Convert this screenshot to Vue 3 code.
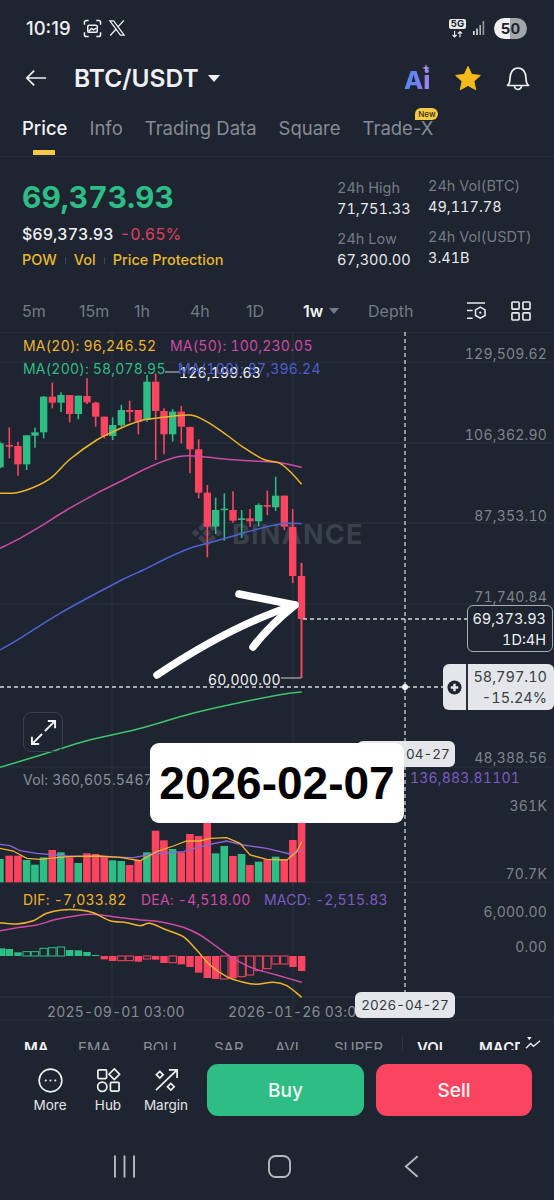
<script setup>
const cx = (z) => z / 3
const cy = (z) => z / 3 + 330
const G = '#2ebd85'
const R = '#fb4560'
const xs = [0,28,54,80,105,131,157,183,209,235,261,287,313,338,364,389,415,441,467,492,518,544,570,596,622,647,673,699,725,750,776,802,827,853]
const raw = [
  ['g',335,415,340,412],['r',292,385,345,350],['r',335,437,348,403],['g',315,420,316,403],['g',293,353,307,317],
  ['g',198,325,200,307],['r',158,235,200,218],['g',187,246,195,218],['r',195,277,195,252],['g',197,268,197,252],
  ['r',145,222,198,217],['r',215,290,218,260],['r',260,325,260,318],['g',262,330,285,318],['g',225,290,240,286],
  ['r',212,275,240,246],['r',240,313,240,275],['g',135,275,155,270],['r',130,390,155,243],['r',235,373,243,313],
  ['g',238,335,245,313],['r',228,340,245,290],['r',290,430,291,358],['r',328,505,358,488],['r',465,682,488,590],
  ['g',503,612,540,590],['g',490,632,536,540],['r',484,578,540,572],['g',540,624,565,570],['r',537,590,565,574],
  ['g',520,590,525,574],['r',482,555,525,530],['g',440,543,497,532],['r',497,600,497,590]
]
const candles = raw.map((c, i) => ({
  x: cx(xs[i]), color: c[0] === 'g' ? G : R, sw: 1.6,
  wt: cy(c[1]), wb: cy(c[2]), bt: cy(c[3]), bh: Math.max(1.5, (c[4] - c[3]) / 3)
}))
candles.push({ x: 292.7, color: R, sw: 1.6, wt: 509, wb: 583, bt: 527, bh: 49 })
candles.push({ x: 301.5, color: R, sw: 2, wt: 563, wb: 678, bt: 576, bh: 43 })

const pts = (arr, oy) => arr.map(([x, y]) => `${(x / 3).toFixed(1)},${(y / 3 + oy).toFixed(1)}`).join(' ')
const smooth = (arr, oy) => {
  const p = arr.map(([x, y]) => [x / 3, y / 3 + oy])
  let d = `M${p[0][0].toFixed(1)} ${p[0][1].toFixed(1)}`
  for (let i = 0; i < p.length - 1; i++) {
    const a = p[i - 1] || p[i], b = p[i], c = p[i + 1], e = p[i + 2] || c
    const c1 = [b[0] + (c[0] - a[0]) / 6, b[1] + (c[1] - a[1]) / 6]
    const c2 = [c[0] - (e[0] - b[0]) / 6, c[1] - (e[1] - b[1]) / 6]
    d += ` C${c1[0].toFixed(1)} ${c1[1].toFixed(1)} ${c2[0].toFixed(1)} ${c2[1].toFixed(1)} ${c[0].toFixed(1)} ${c[1].toFixed(1)}`
  }
  return d
}
const ma20 = smooth([[0,490],[50,488],[105,470],[155,442],[210,388],[290,330],[340,305],[390,283],[440,268],[490,262],[570,255],[620,275],[680,315],[730,352],[790,388],[840,400],[875,430],[905,463]], 330)
const ma50 = smooth([[0,655],[60,625],[120,590],[200,540],[290,490],[370,450],[440,415],[500,390],[550,378],[610,380],[680,388],[760,393],[840,398],[905,412]], 330)
const ma100 = smooth([[0,960],[60,925],[180,850],[365,750],[430,720],[500,685],[570,655],[640,635],[720,612],[800,590],[860,580],[905,581]], 330)
const ma200 = smooth([[0,232],[130,193],[260,152],[410,118],[570,72],[700,42],[840,14],[905,6]], 690)

const volX = [0,28,54,80,105,131,157,183,209,235,261,287,313,338,364,389,415,441,467,492,518,544,570,596,622,647,673,699,725,750,776,802,827,853,879,905]
const volT = [237,227,227,240,254,232,210,217,232,249,220,222,230,241,243,255,240,217,152,181,207,217,162,168,120,220,198,228,222,255,245,238,230,238,180,120]
const volC = ['g','r','r','g','g','g','r','g','r','g','r','r','r','g','g','r','r','g','r','r','g','r','r','r','r','g','g','r','g','r','g','r','g','r','r','r']
const vols = volX.map((x, i) => ({ x: x / 3 - 3.9, y: volT[i] / 3 + 780, h: (307 - volT[i]) / 3, c: volC[i] === 'g' ? G : R }))
const volY = pts([[0,205],[40,213],[80,235],[120,238],[200,230],[300,228],[360,232],[420,242],[470,215],[520,198],[560,183],[600,183],[630,175],[680,173],[720,190],[750,225],[800,238],[860,240],[890,215],[905,185]], 780)
const volP = pts([[0,193],[30,197],[60,212],[110,220],[200,228],[300,230],[400,233],[460,222],[550,215],[620,195],[680,183],[730,195],[800,205],[870,222],[905,210]], 780)

const histRaw = [[5,505,1],[28,507,1],[54,517,1],[80,515,0],[105,515,0],[131,505,0],[157,503,0],[183,501,0],[209,510,1],[235,511,1],[261,516,1],[287,525,1],
  [313,538,1],[338,543,1],[364,542,0],[389,542,0],[415,545,1],[441,537,0],[467,539,1],[492,549,1],[518,548,0],[544,553,1],[570,561,1],[596,578,1],[622,594,1],[647,597,1],[673,597,0],[699,595,1],[725,590,0],[750,585,0],[776,572,0],[802,566,0],[827,552,0],[853,552,0],[879,561,1],[905,573,1]]
const hist = histRaw.map(([x, v, f]) => {
  const up = v < 528
  const t = Math.min(v, 528), h = Math.abs(528 - v)
  return {
    x: x / 3 - 3.7, y: t / 3 + 780, h: Math.max(1, h / 3), w: 7.4,
    fill: f ? (up ? G : R) : 'none', stroke: f ? 'none' : (up ? G : R)
  }
})
const dif = smooth([[0,428],[50,432],[100,422],[140,400],[185,390],[240,390],[280,398],[330,422],[380,428],[420,437],[450,430],[500,450],[550,470],[590,510],[630,555],[680,590],[730,607],[770,613],[820,607],[860,617],[905,652]], 780)
const dea = smooth([[0,452],[60,442],[110,435],[170,418],[230,407],[280,403],[340,410],[420,420],[480,425],[550,442],[600,465],[650,500],[700,535],[760,565],[830,585],[905,607]], 780)

const hLines = [362, 443, 523, 604, 767, 882, 997, 1020]
const vLines = [112, 293]
const axis = [
  ['129,509.62', 359], ['106,362.90', 440], ['87,353.10', 521], ['71,740.84', 602],
  ['48,388.56', 763], ['361K', 811], ['70.7K', 879], ['6,000.00', 917], ['0.00', 952]
]
const tabs = ['Price', 'Info', 'Trading Data', 'Square', 'Trade-X']
const intervals = ['5m', '15m', '1h', '4h', '1D']
const inds = [['MA', 1], ['EMA', 0], ['BOLL', 0], ['SAR', 0], ['AVL', 0], ['SUPER', 0], ['VOL', 1], ['MACD', 1]]
</script>

<template>
  <div class="page">
    <div class="status">
      <span class="time">10:19</span>
      <svg class="shot" viewBox="0 0 20 20" fill="none" stroke="#eef0f3" stroke-width="1.6">
        <path d="M1.5 6V3.5a2 2 0 0 1 2-2H6M14 1.5h2.5a2 2 0 0 1 2 2V6M18.500 14v2.500a2 2 0 0 1-2 2H14M6 18.500H3.500a2 2 0 0 1-2-2V14" />
        <rect x="5" y="6.500" width="10" height="7.500" rx="1.500" />
        <path d="M6 13l3-3 2 1.500 3-2" />
      </svg>
      <svg class="xlogo" viewBox="0 0 24 24" fill="none" stroke="#eef0f3" stroke-width="1.700">
        <path d="M2.500 2.500h5l14 19h-5z" />
        <path d="M21 2l-8 8.800M3 22l8.200-9" />
      </svg>
      <div class="status-right">
        <div class="net">
          <span class="fiveg">5G</span>
          <svg class="updown" viewBox="0 0 18 8" fill="none" stroke="#eef0f3" stroke-width="1.400"><path d="M5.500 0v7M3 5l2.500 2.500L8 5M12 8V1M9.500 3.500L12 1l2.500 2.500" /></svg>
        </div>
        <svg class="signal" viewBox="0 0 14 16" fill="#dfe2e6"><rect x="0" y="11" width="1.600" height="4" /><rect x="3.200" y="8.500" width="1.600" height="6.500" /><rect x="6.400" y="5" width="1.600" height="10" opacity=".75" /><rect x="9.600" y="1" width="1.600" height="14" opacity=".6" /></svg>
        <div class="battery"><span>50</span></div>
      </div>
    </div>

    <div class="header">
      <svg class="back" viewBox="0 0 24 20" fill="none" stroke="#eef0f3" stroke-width="1.900"><path d="M23 10H2M10 2l-8 8 8 8" /></svg>
      <span class="pair">BTC/USDT</span>
      <span class="caret"></span>
      <div class="header-right">
        <div class="ai"><span class="ai-text">Ai</span><svg class="spark" viewBox="0 0 8 8" fill="#b48cf0"><path d="M4 0l1 3 3 1-3 1-1 3-1-3-3-1 3-1z" /></svg></div>
        <svg class="star" viewBox="0 0 26 25" fill="#f3bb1c"><path d="M13 .5l3.700 7.900 8.600 1-6.400 5.800 1.800 8.500L13 19.400l-7.700 4.300 1.800-8.500L.7 9.400l8.600-1z" stroke="#f3bb1c" stroke-linejoin="round" /></svg>
        <svg class="bell" viewBox="0 0 24 25" fill="none" stroke="#eef0f3" stroke-width="1.700"><path d="M1.500 19.500c2-1.500 2.500-3.500 2.500-7.500 0-5.500 3-10 8-10s8 4.500 8 10c0 4 .5 6 2.500 7.500z" stroke-linejoin="round" /><path d="M8.500 20a3.500 3.500 0 0 0 7 0" /></svg>
      </div>
    </div>

    <div class="tabs">
      <div v-for="(t, i) in tabs" :key="t" class="tab" :class="{ active: i === 0 }">
        {{ t }}
        <span v-if="i === 0" class="underline"></span>
        <span v-if="i === 4" class="new">New</span>
      </div>
    </div>

    <div class="price">
      <div class="price-left">
        <div class="big">69,373.93</div>
        <div class="sub"><span class="usd">$69,373.93</span> <span class="pct">-0.65%</span></div>
        <div class="badges"><span>POW</span><i></i><span>Vol</span><i></i><span>Price Protection</span></div>
      </div>
      <div class="stats">
        <div class="stat"><label>24h High</label><b>71,751.33</b></div>
        <div class="stat up"><label>24h Vol(BTC)</label><b>49,117.78</b></div>
        <div class="stat"><label>24h Low</label><b>67,300.00</b></div>
        <div class="stat up"><label>24h Vol(USDT)</label><b>3.41B</b></div>
      </div>
    </div>

    <div class="intervals">
      <span v-for="t in intervals" :key="t">{{ t }}</span>
      <span class="cur">1w<em></em></span>
      <span>Depth</span>
      <div class="int-icons">
        <svg viewBox="0 0 21 21" fill="none" stroke="#e8eaed" stroke-width="1.600"><path d="M1 2h19M1 10h6M1 18h6" /><path d="M15 6.500l5 2.900v5.800l-5 2.900-5-2.900V9.400z" /><circle cx="15" cy="12.300" r="1.200" fill="#e8eaed" stroke="none" /></svg>
        <svg viewBox="0 0 21 21" fill="none" stroke="#e8eaed" stroke-width="1.700"><rect x="1" y="1" width="7.500" height="7.500" rx="1" /><rect x="12.500" y="1" width="7.500" height="7.500" rx="1" /><rect x="1" y="12.500" width="7.500" height="7.500" rx="1" /><rect x="12.500" y="12.500" width="7.500" height="7.500" rx="1" /></svg>
      </div>
    </div>

    <div class="chart">
      <svg class="plot" viewBox="0 332 554 698" width="554" height="698">
        <line x1="0" x2="554" y1="332" y2="332" class="grid" />
        <line v-for="y in hLines" :key="y" x1="0" x2="554" :y1="y" :y2="y" class="grid" />
        <line v-for="x in vLines" :key="x" :x1="x" :x2="x" y1="332" y2="1020" class="grid" />

        <g class="wm">
          <path d="M207 519l9 9-3.500 3.500-5.500-5.500-5.500 5.500-3.500-3.500zM207 547l9-9-3.500-3.500-5.500 5.500-5.500-5.500-3.500 3.500zM207 528l5 5-5 5-5-5zM195.500 529l4 4-4 4-4-4zM218.500 529l4 4-4 4-4-4z" fill="#3a404c" />
          <text x="232" y="544" class="wm-text">BINANCE</text>
        </g>

        <g v-for="(c, i) in candles" :key="i">
          <line :x1="c.x" :x2="c.x" :y1="c.wt" :y2="c.wb" :stroke="c.color" :stroke-width="c.sw" />
          <rect :x="c.x - 3.700" :y="c.bt" width="7.400" :height="c.bh" :fill="c.color" />
        </g>

        <path :d="ma200" class="ln" stroke="#3fc46f" />
        <path :d="ma100" class="ln" stroke="#4f63d8" />
        <path :d="ma50" class="ln" stroke="#cf4aa6" />
        <path :d="ma20" class="ln" stroke="#eeb52c" />

        <rect v-for="(v, i) in vols" :key="'v' + i" :x="v.x" :y="v.y" width="7.600" :height="v.h" :fill="v.c" />
        <polyline :points="volP" class="ln thin" stroke="#8f62d6" />
        <polyline :points="volY" class="ln thin" stroke="#eeb52c" />

        <rect v-for="(h, i) in hist" :key="'h' + i" :x="h.x" :y="h.y" :width="h.w" :height="h.h" :fill="h.fill" :stroke="h.stroke" stroke-width="1" />
        <path :d="dea" class="ln" stroke="#cf4aa6" />
        <path :d="dif" class="ln" stroke="#eeb52c" />

        <line x1="165" x2="179" y1="372" y2="372" stroke="#c9ccd2" />
        <text x="179" y="378" class="tx mark">126,199.63</text>
        <line x1="281" x2="301" y1="678" y2="678" stroke="#c9ccd2" />
        <text x="208" y="685" class="tx mark">60,000.00</text>

        <text x="23" y="351" class="tx" fill="#eeb52c">MA(20): 96,246.52</text>
        <text x="170" y="351" class="tx" fill="#cf4aa6">MA(50): 100,230.05</text>
        <text x="23" y="374" class="tx" fill="#2ebd85">MA(200): 58,078.95</text>
        <text x="178" y="374" class="tx" fill="#4c5fd0">MA(100): 87,396.24</text>

        <text x="23" y="785" class="tx" fill="#8a8f99">Vol: 360,605.5467</text>
        <text x="410" y="783" class="tx" fill="#7b5cc4">136,883.81101</text>

        <text x="23" y="905" class="tx" fill="#eeb52c">DIF: -7,033.82</text>
        <text x="141" y="905" class="tx" fill="#cf4aa6">DEA: -4,518.00</text>
        <text x="264" y="905" class="tx" fill="#7b5cc4">MACD: -2,515.83</text>

        <text x="47" y="1017" class="tx" fill="#878c96">2025-09-01 03:00</text>
        <text x="228" y="1017" class="tx" fill="#878c96">2026-01-26 03:00</text>

        <text v-for="a in axis" :key="a[0]" x="547" :y="a[1]" class="tx axis">{{ a[0] }}</text>

        <line x1="405" x2="405" y1="332" y2="992" class="dash" />
        <line x1="0" x2="444" y1="687" y2="687" class="dash" />
        <line x1="303" x2="467" y1="619" y2="619" class="dash" />
        <circle cx="405" cy="687" r="3" fill="#f1f2f4" />

        <path d="M157 675Q232 625 295 605" class="arrow" />
        <path d="M239 594L295 605Q270 625 253 647" class="arrow" />
      </svg>

      <div class="tag-price"><span>69,373.93</span><span>1D:4H</span></div>
      <div class="tag-cross">
        <div class="plus"><svg viewBox="0 0 16 16"><circle cx="8" cy="8" r="7.500" fill="#1e2430" /><path d="M8 4v8M4 8h8" stroke="#e6e8eb" stroke-width="2.600" /></svg></div>
        <div class="cross-vals"><span>58,797.10</span><span>-15.24%</span></div>
      </div>
      <div class="expand">
        <svg viewBox="0 0 28 28" fill="none" stroke="#f0f1f3" stroke-width="2"><path d="M15.500 12.500L26 2M18.500 2H26v7.500M12.500 15.500L2 26M9.500 26H2v-7.500" /></svg>
      </div>
      <div class="date-back">2026-04-27</div>
      <div class="date-front">2026-02-07</div>
      <div class="date-axis">2026-04-27</div>
    </div>

    <div class="inds">
      <span v-for="d in inds" :key="d[0]" :class="{ on: d[1] }">{{ d[0] }}</span>
      <i class="ind-sep"></i>
      <svg class="ind-icon" viewBox="0 0 18 16" fill="none" stroke="#e8eaed" stroke-width="1.500"><path d="M0 2v14M2 1h5L4.500 4.500z" fill="#e8eaed" stroke="none" /><path d="M1 13l5-5 3 3 7-6" /></svg>
    </div>

    <div class="actions">
      <div class="act">
        <svg viewBox="0 0 26 26" fill="none" stroke="#f0f1f3" stroke-width="1.700"><circle cx="13" cy="13" r="11.800" /><circle cx="8" cy="13" r="1.100" fill="#f0f1f3" stroke="none" /><circle cx="13" cy="13" r="1.100" fill="#f0f1f3" stroke="none" /><circle cx="18" cy="13" r="1.100" fill="#f0f1f3" stroke="none" /></svg>
        <span>More</span>
      </div>
      <div class="act">
        <svg viewBox="0 0 26 26" fill="none" stroke="#f0f1f3" stroke-width="1.800"><rect x="2" y="2" width="9" height="9" rx="1" /><path d="M19 1l5.500 5.500L19 12l-5.500-5.500z" /><circle cx="6.500" cy="19.500" r="4.800" /><rect x="15" y="15" width="9" height="9" rx="1" /></svg>
        <span>Hub</span>
      </div>
      <div class="act">
        <svg viewBox="0 0 26 26" fill="none" stroke="#f0f1f3" stroke-width="1.800"><path d="M2 23L24 2M15.500 2H24v8.500" /><path d="M6 3.500l3.500 3.500L6 10.500 2.500 7z" /><path d="M17.500 16l3.500 3.500-3.500 3.500-3.500-3.500z" /></svg>
        <span>Margin</span>
      </div>
      <button class="btn buy">Buy</button>
      <button class="btn sell">Sell</button>
    </div>

    <div class="nav">
      <svg class="n1" viewBox="0 0 22 23" fill="none" stroke="#b5b8bd" stroke-width="2"><path d="M1 0v23M11 0v23M21 0v23" /></svg>
      <svg class="n2" viewBox="0 0 24 24" fill="none" stroke="#b5b8bd" stroke-width="2"><rect x="1" y="1" width="22" height="22" rx="7" /></svg>
      <svg class="n3" viewBox="0 0 16 24" fill="none" stroke="#b5b8bd" stroke-width="2"><path d="M14.500 1L2 12l12.500 11" /></svg>
    </div>
  </div>
</template>

<style>
html, body { margin: 0; background: #1e2430; }
</style>

<style scoped>
.page {
  width: 554px;
  height: 1200px;
  background: #1e2430;
  color: #eef0f3;
  font-family: Inter, "Noto Sans", sans-serif;
  font-variant-numeric: tabular-nums;
  display: flex;
  flex-direction: column;
  overflow: hidden;
}
.status {
  height: 56px;
  padding: 0 27px 0 26px;
  display: flex;
  align-items: center;
  flex: none;
}
.time { font-size: 18.5px; font-weight: 500; width: 57px; font-variant-numeric: normal; }
.shot { width: 19px; height: 19px; }
.xlogo { width: 18px; height: 18px; margin-left: 6px; }
.status-right { margin-left: auto; display: flex; align-items: center; }
.net { width: 17px; display: flex; flex-direction: column; align-items: center; }
.fiveg {
  background: #e8eaed; color: #1e2430; font-size: 9.5px; font-weight: 700;
  border-radius: 2px; line-height: 10px; width: 17px; text-align: center;
}
.updown { width: 15px; height: 8px; margin-top: 1px; }
.signal { width: 14px; height: 16px; margin-left: 7px; }
.battery {
  width: 33px; height: 21px; border-radius: 11px; margin-left: 7px;
  background: linear-gradient(90deg, #f0f1f3 0 50%, #a2a5aa 50% 100%);
  color: #1e2430; font-size: 15px; font-weight: 700; text-align: center; line-height: 21px;
}
.header {
  height: 44px;
  padding: 0 24px 0 25px;
  display: flex;
  align-items: center;
  flex: none;
}
.back { width: 22px; height: 20px; }
.pair { font-size: 24.5px; font-weight: 600; margin-left: 27px; }
.caret {
  width: 0; height: 0; margin-left: 9px;
  border-left: 6px solid transparent; border-right: 6px solid transparent; border-top: 7px solid #eef0f3;
}
.header-right { margin-left: auto; display: flex; align-items: center; }
.ai { position: relative; width: 27px; margin-top: 4px; }
.ai-text {
  font-size: 25px; font-weight: 800; line-height: 24px; display: block;
  background: linear-gradient(100deg, #4a8cf5, #7a7cf0 60%, #b48cf0);
  -webkit-background-clip: text; background-clip: text; color: transparent;
}
.spark { position: absolute; right: 1px; top: -4px; width: 8px; height: 8px; }
.star { width: 26px; height: 25px; margin-left: 24px; }
.bell { width: 24px; height: 25px; margin-left: 25px; }
.tabs {
  height: 57px;
  box-sizing: border-box;
  padding: 0 22px;
  display: flex;
  gap: 22px;
  align-items: center;
  border-bottom: 1px solid #2a303b;
  flex: none;
  font-variant-numeric: normal;
}
.tab { position: relative; font-size: 18.500px; font-weight: 400; color: #868c97; }
.tab.active { color: #f1f2f4; font-weight: 500; }
.underline { position: absolute; left: 11px; top: 33px; width: 22px; height: 5px; background: #f3c945; }
.new {
  position: absolute; right: -5px; top: -9px; width: 23px; height: 12px; border-radius: 6px 6px 6px 0;
  background: #f3c945; color: #3a2f0a; font-size: 8px; line-height: 12px; text-align: center; font-weight: 500;
}
.price {
  height: 133px;
  padding: 0 0 0 22px;
  display: flex;
  flex: none;
  box-sizing: border-box;
}
.price-left { width: 315px; padding-top: 22px; }
.big { font-size: 30px; font-weight: 700; line-height: 36px; color: #2ebd85; }
.sub { font-size: 16px; margin-top: 9px; line-height: 20px; }
.usd { color: #f1f2f4; font-weight: 500; }
.pct { color: #e0405f; margin-left: 2px; }
.badges {
  margin-top: 7px; font-size: 14.500px; font-weight: 500; color: #e8b92e;
  display: flex; align-items: center; gap: 8px; line-height: 18px;
}
.badges i { width: 1px; height: 7px; background: #3c424d; }
.stats {
  display: grid;
  grid-template-columns: 91px auto;
  row-gap: 9px;
  align-content: start;
  padding-top: 20px;
}
.stat { display: flex; flex-direction: column; font-size: 14.500px; line-height: 21px; }
.stat.up { margin-top: -2px; }
.stat label { color: #757b86; }
.stat b { font-weight: 400; color: #e6e8eb; }
.intervals {
  height: 42px;
  padding: 0 23px 0 22px;
  display: grid;
  grid-template-columns: 57px 55px 56px 56px 57px 65px auto 1fr;
  align-items: center;
  font-size: 16px;
  color: #757b86;
  flex: none;
  font-variant-numeric: normal;
}
.cur { color: #f1f2f4; font-weight: 600; display: flex; align-items: center; }
.cur em {
  margin-left: 6px; width: 0; height: 0;
  border-left: 5px solid transparent; border-right: 5px solid transparent; border-top: 6px solid #757b86;
}
.int-icons { justify-self: end; display: flex; gap: 25px; }
.int-icons svg { width: 20px; height: 20px; display: block; }
.chart { position: relative; height: 698px; flex: none; }
.plot { position: absolute; left: 0; top: 0; display: block; }
.grid { stroke: #2b313c; stroke-width: 1; }
.wm-text { font-size: 27px; font-weight: 700; fill: #3a404c; letter-spacing: 1.200px; font-family: Inter, sans-serif; }
.ln { fill: none; stroke-width: 1.500; }
.thin { stroke-width: 1.300; }
.tx { font-family: Inter, sans-serif; font-size: 14px; letter-spacing: .2px; font-variant-numeric: tabular-nums; }
.mark { fill: #f0f1f3; }
.axis { fill: #7e838d; text-anchor: end; }
.dash { stroke: #d5d7db; stroke-width: 1.300; stroke-dasharray: 4 3; }
.arrow { fill: none; stroke: #fff; stroke-width: 7.500; stroke-linecap: round; stroke-linejoin: round; }
.tag-price {
  position: absolute; left: 467px; top: 273px; width: 86px; height: 47px;
  box-sizing: border-box; border: 1px solid #a7abb2; border-radius: 6px; background: #1e2430;
  display: flex; flex-direction: column; align-items: flex-end; justify-content: center;
  padding-right: 6px; font-size: 14.500px; line-height: 21px; color: #eef0f3;
}
.tag-cross {
  position: absolute; left: 443px; top: 332px; width: 111px; height: 46px; border-radius: 6px;
  background: #e4e6ea; display: flex; overflow: hidden;
}
.plus { width: 23px; display: flex; align-items: center; justify-content: center; border-right: 2px solid #2b313c; }
.plus svg { width: 15px; height: 15px; }
.cross-vals {
  flex: 1; display: flex; flex-direction: column; align-items: flex-end; justify-content: center;
  padding-right: 7px; color: #3a3f48; font-size: 14.500px; line-height: 21px;
}
.expand {
  position: absolute; left: 23px; top: 380px; width: 40px; height: 40px; box-sizing: border-box;
  border: 1px solid #3a404b; border-radius: 8px; display: flex; align-items: center; justify-content: center;
}
.expand svg { width: 27px; height: 27px; }
.date-back {
  position: absolute; left: 357px; top: 409px; width: 98px; height: 26px; border-radius: 6px;
  background: #e4e6ea; color: #33373f; font-size: 13.500px; line-height: 26px; text-align: center;
}
.date-front {
  position: absolute; left: 150px; top: 411px; width: 254px; height: 80px; border-radius: 9px;
  background: #fff; color: #000; font-family: "Liberation Sans", Arial, sans-serif; font-weight: 700;
  font-size: 46px; line-height: 80px; text-align: center;
}
.date-axis {
  position: absolute; left: 355px; top: 660px; width: 100px; height: 26px; border-radius: 6px;
  background: #e4e6ea; color: #33373f; font-size: 13.500px; line-height: 26px; text-align: center;
}
.inds {
  height: 20px;
  padding-left: 24px;
  position: relative;
  display: grid;
  grid-template-columns: 54px 65px 71px 61px 59px 83px 62px 41px;
  overflow: hidden;
  align-items: start;
  font-size: 15px;
  line-height: 20px;
  color: #8a8f99;
  flex: none;
  box-sizing: border-box;
}
.inds span { padding-top: 8px; white-space: nowrap; overflow: hidden; }
.inds .on { color: #f1f2f4; font-weight: 600; }
.ind-sep { position: absolute; left: 402px; top: 6px; width: 1px; height: 14px; background: #2e343f; }
.ind-icon { position: absolute; left: 525px; top: 6px; width: 17px; height: 15px; }
.actions {
  margin-top: 14px;
  height: 52px;
  padding: 0 22px 0 21px;
  display: flex;
  align-items: center;
  flex: none;
}
.act { width: 58px; display: flex; flex-direction: column; align-items: center; font-size: 13.500px; color: #e2e4e8; }
.act svg { width: 25px; height: 25px; display: block; margin-bottom: 4px; }
.btn {
  height: 52px; border: 0; border-radius: 11px; font-family: inherit; font-size: 19px; font-weight: 500; color: #f4f5f6;
}
.buy { width: 157px; margin-left: 12px; background: #2ebd85; }
.sell { width: 156px; margin-left: 12px; background: #fb4560; }
.nav {
  padding-top: 39px;
  display: grid;
  grid-template-columns: 114px 154px 136px auto;
  grid-template-areas: ". a b c";
  align-items: start;
  flex: none;
}
.n1 { grid-area: a; width: 21px; height: 23px; }
.n2 { grid-area: b; width: 23px; height: 23px; }
.n3 { grid-area: c; width: 15px; height: 23px; }
</style>
